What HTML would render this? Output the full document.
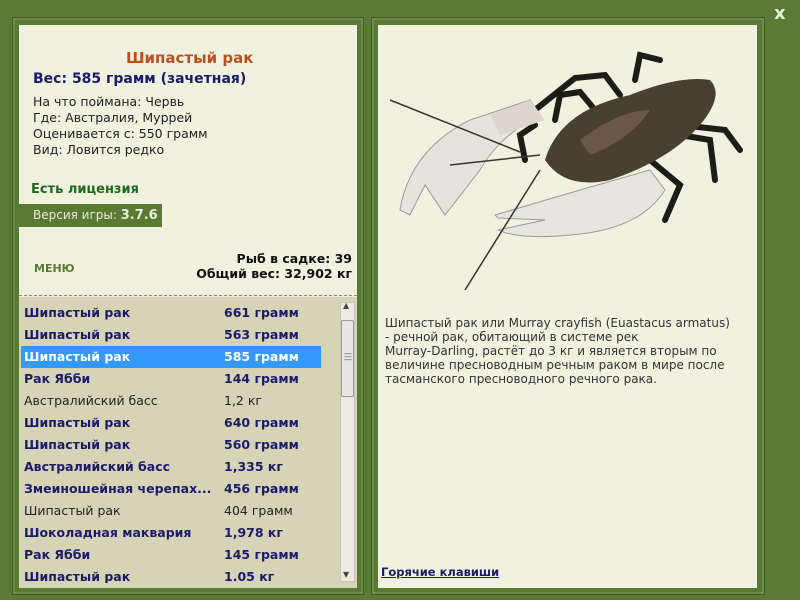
<!DOCTYPE html>
<html><head><meta charset="utf-8"><style>
*{margin:0;padding:0;box-sizing:border-box}
body{width:800px;height:600px;background:#587a34;position:relative;overflow:hidden;font-family:Tahoma,"DejaVu Sans","Liberation Sans",sans-serif;}
.frame{position:absolute;border:2px solid #6e8f47;outline:1px solid #3f5d22}
.panel{position:absolute;background:#f1f1df}
.t{position:absolute;white-space:nowrap}
.row{position:absolute;left:21px;width:300px;height:22px;font-size:12.5px;line-height:22px}
.row span{position:absolute}
.row .n{left:3px}.row .w{left:203px}
.b{font-weight:bold;color:#1c1a6b}
.r{color:#222}
.sel{background:#3399ff;color:#fff}
</style></head><body>
<div class="frame" style="left:13px;top:18px;width:350px;height:576px"></div>
<div class="panel" style="left:19px;top:25px;width:338px;height:563px"></div>
<div class="frame" style="left:372px;top:18px;width:392px;height:576px"></div>
<div class="panel" style="left:378px;top:25px;width:379px;height:563px"></div>
<div class="t" style="top:3px;font:bold 18px 'DejaVu Sans',sans-serif;color:#e6ecd6;left:774px">x</div>

<div class="t" style="left:126px;top:49px;font-size:15px;font-weight:bold;color:#b8511f">Шипастый рак</div>
<div class="t" style="left:33px;top:71px;font-size:14px;font-weight:bold;color:#1c1a6b">Вес: 585 грамм (зачетная)</div>
<div class="t" style="left:33px;top:94px;font-size:12.5px;line-height:16px;color:#222">На что поймана: Червь<br>Где: Австралия, Муррей<br>Оценивается с: 550 грамм<br>Вид: Ловится редко</div>
<div class="t" style="left:31px;top:182px;font-size:13px;font-weight:bold;color:#226622">Есть лицензия</div>
<div class="t" style="left:19px;top:204px;width:143px;height:23px;background:#5a7a34;color:#e6ecd6;font-size:12px;line-height:23px;padding-left:14px">Версия игры: <b style="font-size:13px">3.7.6</b></div>
<div class="t" style="left:34px;top:262px;font-size:11px;font-weight:900;color:#5a7a34">МЕНЮ</div>
<div class="t" style="right:448px;top:251px;font-size:12.5px;font-weight:bold;color:#111;text-align:right;line-height:15px">Рыб в садке: 39<br>Общий вес: 32,902 кг</div>

<div style="position:absolute;left:19px;top:295px;width:338px;border-top:1px dashed #8a8a6a"></div>
<div style="position:absolute;left:19px;top:297px;width:338px;height:291px;background:#d6d4b6"></div>
<div style="position:absolute;left:340px;top:302px;width:15px;height:280px;background:#eceae0;border:1px solid #c9c7b8"></div>
<div style="position:absolute;left:341px;top:320px;width:13px;height:77px;background:#e6e6e2;border:1px solid #9a9a9a;border-radius:2px"></div>
<div class="t" style="left:343px;top:301px;font-size:8px;color:#444">▲</div>
<div class="t" style="left:343px;top:570px;font-size:8px;color:#444">▼</div>
<div class="t" style="left:344px;top:352px;font-size:8px;color:#555;line-height:3px">—<br>—<br>—</div>

<div class="row b" style="top:302px"><span class="n">Шипастый рак</span><span class="w">661 грамм</span></div>
<div class="row b" style="top:324px"><span class="n">Шипастый рак</span><span class="w">563 грамм</span></div>
<div class="row b sel" style="top:346px"><span class="n">Шипастый рак</span><span class="w">585 грамм</span></div>
<div class="row b" style="top:368px"><span class="n">Рак Ябби</span><span class="w">144 грамм</span></div>
<div class="row r" style="top:390px"><span class="n">Австралийский басс</span><span class="w">1,2 кг</span></div>
<div class="row b" style="top:412px"><span class="n">Шипастый рак</span><span class="w">640 грамм</span></div>
<div class="row b" style="top:434px"><span class="n">Шипастый рак</span><span class="w">560 грамм</span></div>
<div class="row b" style="top:456px"><span class="n">Австралийский басс</span><span class="w">1,335 кг</span></div>
<div class="row b" style="top:478px"><span class="n">Змеиношейная черепах...</span><span class="w">456 грамм</span></div>
<div class="row r" style="top:500px"><span class="n">Шипастый рак</span><span class="w">404 грамм</span></div>
<div class="row b" style="top:522px"><span class="n">Шоколадная маквария</span><span class="w">1,978 кг</span></div>
<div class="row b" style="top:544px"><span class="n">Рак Ябби</span><span class="w">145 грамм</span></div>
<div style="position:absolute;left:0;top:566px;width:339px;height:17px;overflow:hidden"><div class="row b" style="top:0"><span class="n">Шипастый рак</span><span class="w">1.05 кг</span></div></div>

<svg style="position:absolute;left:380px;top:40px" width="377" height="260" viewBox="0 0 377 260">
<g stroke="#1d1d18" stroke-width="6" fill="none" stroke-linecap="round">
<path d="M155 70 L195 38 L225 35 L240 55"/>
<path d="M175 80 L180 55 L200 52 L215 70"/>
<path d="M255 40 L260 15 L280 20"/>
<path d="M300 85 L345 90 L360 110"/>
<path d="M300 95 L330 100 L335 140"/>
<path d="M270 120 L300 145 L285 180"/>
<path d="M145 120 L140 95 L155 85"/>
</g>
<path d="M165 120 Q180 70 250 55 Q300 35 330 40 Q345 55 320 85 Q290 120 230 140 Q185 150 165 120Z" fill="#4a4030"/>
<path d="M200 100 Q240 70 270 70 Q250 100 210 115Z" fill="#6b5848"/>
<path d="M20 170 Q30 110 90 80 L150 60 L160 75 Q120 95 100 130 L65 175 L45 145 L30 175Z" fill="#e4e4dc" stroke="#999" stroke-width="1"/>
<path d="M110 75 L150 60 L165 80 L120 95Z" fill="#dcd6cc"/>
<path d="M115 175 L200 150 L270 130 L285 150 Q260 190 190 195 Q140 200 118 190 L165 180 L118 178Z" fill="#e6e6de" stroke="#999" stroke-width="1"/>
<g stroke="#3a332a" stroke-width="1.5" fill="none"><path d="M10 60 L140 112"/><path d="M85 250 L160 130"/><path d="M160 115 L70 125"/></g>
</svg>

<div class="t" style="left:385px;top:316px;font-size:12px;line-height:14px;color:#333">Шипастый рак или Murray crayfish (Euastacus armatus)<br>- речной рак, обитающий в системе рек<br>Murray-Darling, растёт до 3 кг и является вторым по<br>величине пресноводным речным раком в мире после<br>тасманского пресноводного речного рака.</div>
<div class="t" style="left:381px;top:565px;font-size:11.5px;font-weight:bold;color:#1c1a6b;text-decoration:underline">Горячие клавиши</div>
</body></html>
